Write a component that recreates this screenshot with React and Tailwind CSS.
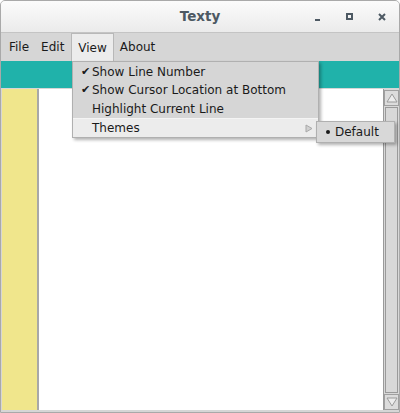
export default function App() {
  const font = { fontFamily: '"DejaVu Sans", sans-serif' };

  return (
    <div
      className="w-[400px] h-[413px] flex flex-col border border-[#a9a9a9] rounded-t-[5px] overflow-hidden bg-[#d6d6d6] relative text-[12px] text-[#1a1a1a]"
      style={font}
    >
      {/* TITLE BAR */}
      <div className="h-[32px] shrink-0 flex items-center relative bg-gradient-to-b from-[#fbfbfb] to-[#ebebeb] border-b border-[#c4c4c4]">
        <div className="flex-1 text-center font-bold text-[#4d5963] text-[13.5px]">Texty</div>
        <div className="absolute right-0 top-0 h-full flex items-center">
          <div className="w-[32px] flex justify-center">
            <div className="w-[5px] h-[2px] bg-[#4d5963] mt-[6px]"></div>
          </div>
          <div className="w-[32px] flex justify-center">
            <div className="w-[7px] h-[7px] border-2 border-[#4d5963]"></div>
          </div>
          <div className="w-[34px] flex justify-center">
            <svg width="8" height="8" viewBox="0 0 8 8">
              <path d="M1 1 L7 7 M7 1 L1 7" stroke="#4d5963" strokeWidth="2" />
            </svg>
          </div>
        </div>
      </div>

      {/* MENU BAR */}
      <div className="h-[28px] shrink-0 flex items-stretch bg-[#d6d6d6] pl-[2px]">
        <div className="px-[6px] flex items-center">File</div>
        <div className="px-[6px] flex items-center">Edit</div>
        <div className="px-[6px] flex items-center bg-[#ececec] border border-[#b8b8b8] border-b-0 ml-[1px]">View</div>
        <div className="px-[6px] flex items-center">About</div>
      </div>

      {/* TOOLBAR STRIP */}
      <div className="h-[27px] shrink-0 bg-[#20b2aa]"></div>

      {/* EDITOR */}
      <div className="flex-1 flex border-t border-[#d6d6d6] pl-[1px] pb-[2px]">
        <div className="w-[35px] bg-[#f0e68c]"></div>
        <div className="w-[2px] bg-[#a8a8a8]"></div>
        <div className="flex-1 bg-white"></div>
        <div className="w-[16px] bg-[#d8d8d8] flex flex-col border-l border-[#9a9a9a] pt-[1px]">
          <div className="h-[16px] flex items-center justify-center border border-[#a0a0a0] bg-[#dcdcdc]">
            <svg width="12" height="10" viewBox="0 0 12 10">
              <path d="M6 1 L11 9 L1 9 Z" fill="#ececec" stroke="#9a9a9a" strokeWidth="1" />
            </svg>
          </div>
          <div className="flex-1 border border-[#9a9a9a] bg-[#d8d8d8] mx-[1px] my-[1px]"></div>
          <div className="h-[16px] flex items-center justify-center border border-[#a0a0a0] bg-[#dcdcdc]">
            <svg width="12" height="10" viewBox="0 0 12 10">
              <path d="M6 9 L11 1 L1 1 Z" fill="#ececec" stroke="#9a9a9a" strokeWidth="1" />
            </svg>
          </div>
        </div>
      </div>

      {/* VIEW MENU POPUP */}
      <div className="absolute left-[71px] top-[60px] w-[247px] bg-[#d6d6d6] border border-[#b0b0b0] shadow-[2px_2px_3px_rgba(0,0,0,0.3)]">
        <div className="h-[19px] flex items-center pl-[8px] pt-[1px]">
          <span className="w-[11px] text-[11px]">✔</span>Show Line Number
        </div>
        <div className="h-[18px] flex items-center pl-[8px]">
          <span className="w-[11px] text-[11px]">✔</span>Show Cursor Location at Bottom
        </div>
        <div className="h-[19px] flex items-center pl-[19px]">Highlight Current Line</div>
        <div className="h-[19px] flex items-center pl-[19px] bg-[#ececec] border-t border-[#f4f4f4] relative">
          Themes
          <svg className="absolute right-[5px] top-[5px]" width="8" height="9" viewBox="0 0 8 9">
            <path d="M1 1 L7 4.5 L1 8 Z" fill="#d0d0d0" stroke="#a8a8a8" strokeWidth="1" />
          </svg>
        </div>
      </div>

      {/* THEMES SUBMENU */}
      <div className="absolute left-[315px] top-[120px] w-[79px] h-[22px] bg-[#d8d8d8] border border-[#b0b0b0] shadow-[2px_2px_3px_rgba(0,0,0,0.3)] flex items-center pl-[9px]">
        <span className="w-[4px] h-[4px] rounded-full bg-[#1a1a1a] mr-[5px]"></span>Default
      </div>
    </div>
  );
}
